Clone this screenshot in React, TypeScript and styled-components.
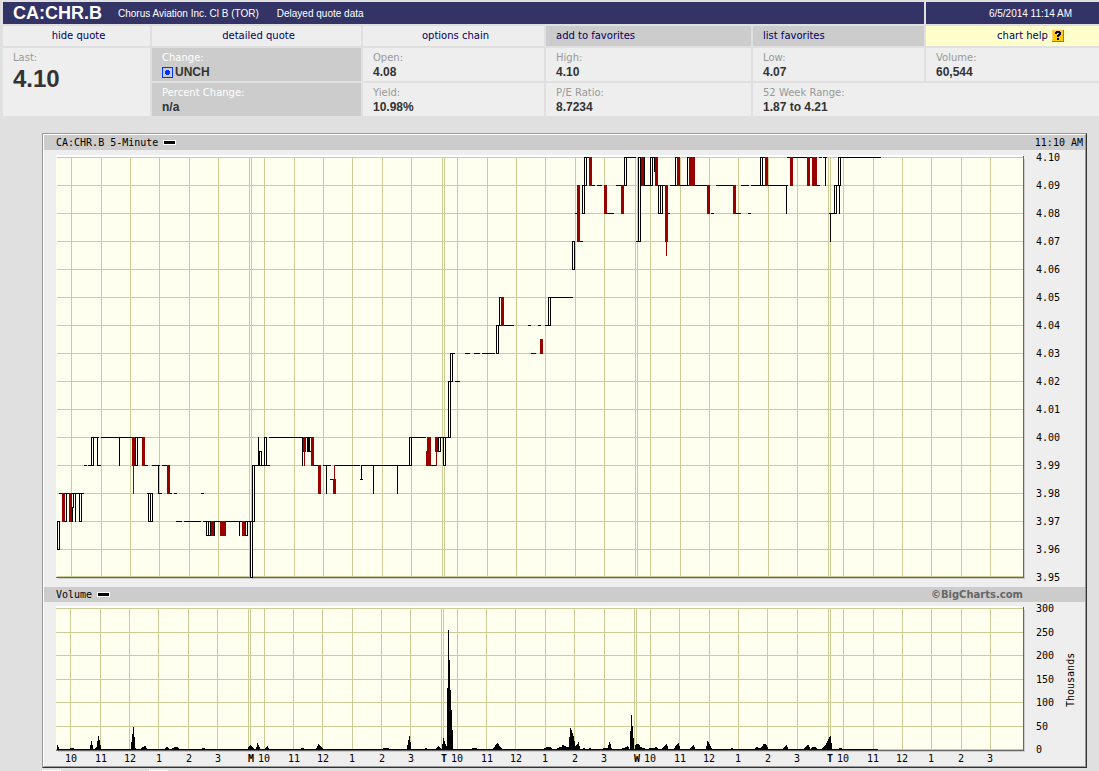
import React from "react";
import styled, { createGlobalStyle } from "styled-components";

const GlobalStyle = createGlobalStyle`
  body {
    margin: 0;
    background: #e0e0e0;
    font-family: Verdana, "DejaVu Sans", sans-serif;
    font-size: 10px;
    color: #333;
  }
`;

/* ---------- quote table ---------- */

const Quote = styled.div`
  display: grid;
  grid-template-columns: 147fr 209fr 181fr 205fr 171fr 173fr;
  grid-template-rows: 22px 20px;
  gap: 2px;
  padding: 2px 0 0 3px;
  white-space: nowrap;
`;

const TitleBar = styled.header`
  grid-column: span 5;
  display: flex;
  align-items: center;
  padding-left: 10px;
  background: #333366;
  color: #fff;
  font-family: "Liberation Sans", Arial, sans-serif;
`;

const Symbol = styled.h1`
  margin: 0;
  width: 105px;
  font-size: 18px;
  line-height: 22px;
`;

const Company = styled.span`
  margin-right: 18px;
`;

const Stamp = styled.time`
  display: flex;
  align-items: center;
  justify-content: center;
  padding-left: 36px;
  background: #333366;
  color: #fff;
  font-family: "Liberation Sans", Arial, sans-serif;
`;

const NavLink = styled.a<{ $tone?: string; $align?: string; $indent?: number }>`
  display: flex;
  align-items: center;
  justify-content: ${(p) => p.$align ?? "center"};
  gap: 4px;
  padding-left: ${(p) => p.$indent ?? 4}px;
  background: ${(p) => p.$tone ?? "#eee"};
  color: #000066;
  line-height: 20px;
  text-decoration: none;
`;

const Facts = styled.dl`
  grid-column: 1 / -1;
  display: grid;
  grid-template-columns: 147fr 209fr 181fr 205fr 171fr 173fr;
  grid-auto-rows: 33px;
  gap: 2px;
  margin: 0;
`;

const Fact = styled.div<{ $dark?: boolean; $rows?: number; $cols?: number }>`
  grid-row: span ${(p) => p.$rows ?? 1};
  grid-column: span ${(p) => p.$cols ?? 1};
  padding: 4px 0 0 10px;
  background: ${(p) => (p.$dark ? "#ccc" : "#eee")};
`;

const Label = styled.dt<{ $light?: boolean }>`
  color: ${(p) => (p.$light ? "#fff" : "#999")};
  line-height: 12px;
`;

const Value = styled.dd<{ $big?: boolean }>`
  display: flex;
  align-items: center;
  gap: 2px;
  margin: 0;
  font: bold ${(p) => (p.$big ? "24px/30px" : "12px/16px")} "Liberation Sans", Arial, sans-serif;
`;

/* ---------- chart ---------- */

const Frame = styled.main`
  margin: 17px 12px 0 42px;
  border: 1px solid #333;
  border-top-color: #999;
  border-left-color: #999;
`;

const Inner = styled.div`
  border: 1px solid #999;
  border-top-color: #fff;
  border-left-color: #fff;
  background: #eee;
`;

const PanelBar = styled.div<{ $endPad: number }>`
  display: flex;
  align-items: center;
  height: 15px;
  padding: 0 ${(p) => p.$endPad}px 0 12px;
  background: #ccc;
  color: #000;
  font: 10px/15px "DejaVu Sans Mono", monospace;
`;

const Legend = styled.span`
  width: 11px;
  height: 3px;
  margin-left: 5px;
  border: 1px solid #fff;
  background: #000;
`;

const BarEnd = styled.span`
  margin-left: auto;
`;

const Credit = styled(BarEnd)`
  color: #666;
  font: bold 10px/15px Verdana, "DejaVu Sans", sans-serif;
`;

const Plot = styled.svg`
  display: block;
  width: 100%;
  height: auto;
  font: 10px "DejaVu Sans Mono", monospace;
`;

const Tabs = styled.div`
  display: flex;
  gap: 88px;
  margin: 2px 0 0 42px;
`;

const TabEdge = styled.span`
  width: 19px;
  height: 1px;
  background: #fff;
`;

/* ---------- chart data ---------- */

const hours = [
  71, 101, 130, 159, 189, 218, 249, 251, 264, 294, 323, 352, 382, 411, 442, 444, 457, 487, 516, 545, 575,
  604, 635, 637, 650, 680, 709, 738, 768, 797, 828, 830, 843, 873, 902, 931, 961, 990,
];
const volumeHours = [
  70, 100, 129, 158, 188, 217, 248, 250, 264, 293, 322, 352, 381, 410, 441, 443, 457, 486, 515, 545, 574,
  604, 634, 636, 650, 679, 709, 738, 767, 797, 828, 830, 843, 873, 902, 931, 961, 990,
];
const hourLabels = [
  "10", "11", "12", "1", "2", "3", "", "M", "10", "11", "12", "1", "2", "3", "", "T", "10", "11", "12", "1",
  "2", "3", "", "W", "10", "11", "12", "1", "2", "3", "", "T", "10", "11", "12", "1", "2", "3",
];
const prices = [410, 409, 408, 407, 406, 405, 404, 403, 402, 401, 400, 399, 398, 397, 396, 395];
const priceY = (p: number) => 157 + (410 - p) * 28;
const volumeTicks: [number, number][] = [
  [300, 608], [250, 632], [200, 655], [150, 679], [100, 702], [50, 726], [0, 749],
];

/* level: [price, [from, to, from, to, ...]] */
const levels: [number, number[]][] = [
  [410, [584, 592, 624, 636, 638, 645, 650, 657, 675, 680, 687, 695, 760, 768, 787, 817, 819, 822, 823, 827, 838, 881]],
  [409, [582, 587, 592, 595, 597, 602, 616, 621, 624, 627, 644, 653, 657, 666, 670, 710, 716, 733, 741, 749, 751, 788, 817, 820, 834, 841]],
  [408, [575, 577, 607, 614, 668, 670, 711, 714, 736, 741, 748, 751, 829, 837]],
  [407, [580, 583, 636, 641]],
  [405, [499, 504, 548, 573]],
  [404, [496, 514, 528, 531, 538, 541, 545, 551]],
  [403, [450, 455, 465, 470, 474, 480, 482, 495, 531, 536]],
  [402, [448, 453, 455, 460]],
  [400, [91, 99, 101, 145, 269, 314, 409, 426, 438, 451]],
  [399, [84, 87, 88, 92, 97, 101, 145, 148, 152, 160, 162, 169, 252, 270, 314, 318, 323, 331, 334, 360, 361, 412, 431, 437]],
  [398.5, [330, 333, 360, 363]],
  [398, [59, 84, 147, 153, 158, 162, 169, 172, 174, 177, 201, 204]],
  [397, [176, 182, 184, 201, 203, 255]],
];

/* rising bars: [x, high, low] */
const hollow: [number, number, number][] = [
  [57, 397, 396], [64, 398, 397], [71, 398, 397.5], [79, 398, 397], [91, 400, 399], [135, 400, 399],
  [148, 398, 397], [150, 398, 397], [206, 397, 396.5], [208, 397, 396.5], [245, 397, 396.5],
  [250, 397, 395], [252, 399, 397], [259, 399.5, 399], [264, 400, 399], [309, 400, 399.5],
  [409, 400, 399], [438, 400, 399.5], [443, 400, 399], [448, 402, 400], [450, 403, 402],
  [496, 404, 403], [499, 405, 404], [548, 405, 404], [572, 407, 406], [582, 409, 408], [584, 410, 409],
  [624, 410, 409], [638, 410, 407], [650, 410, 409], [658, 409, 408], [660, 409, 408], [675, 410, 409],
  [687, 410, 409], [760, 410, 409], [834, 409, 408], [838, 410, 409],
];

/* black ranges: [x, high, low, width] */
const wicks: [number, number, number, number][] = [
  [72, 397.5, 397, 1], [75, 398, 397, 1], [97, 400, 399, 1], [119, 400, 399, 1], [158, 399, 398, 1],
  [214, 397, 396.5, 1], [239, 397, 396.5, 1], [258, 400, 399, 1], [302, 400, 399, 1],
  [307, 400, 399.5, 2], [326, 399, 398, 1], [361, 399, 398.5, 1], [373, 399, 398, 1], [397, 399, 398, 1],
  [644, 410, 409, 1], [654, 410, 409.5, 1], [786, 409, 408, 1], [825, 410, 409, 1], [830, 408, 407, 1],
  [839, 409, 408, 1],
];

/* falling bars: [x, high, low, width] */
const falling: [number, number, number, number][] = [
  [62, 398, 397, 3], [69, 398, 397, 3], [132, 400, 399, 3], [133, 399, 398, 1], [142, 400, 399, 3],
  [167, 399, 398, 3], [211, 397, 396.5, 3], [220, 397, 396.5, 6], [242, 397, 396.5, 3],
  [303, 400, 399.5, 3], [304, 399.5, 399, 1], [311, 400, 399, 3], [318, 399, 398, 3],
  [334, 399, 398.5, 1], [333, 398.5, 398, 3], [427, 400, 399, 4], [426, 399.5, 399, 1],
  [435, 400, 399.5, 3], [436, 399.5, 399, 1], [501, 405, 404, 3], [540, 403.5, 403, 3],
  [577, 409, 407, 3], [589, 410, 409, 3], [604, 409, 408, 3], [621, 409, 408, 3], [641, 410, 409, 3],
  [655, 410, 409, 3], [665, 409, 407, 3], [666, 407, 406.5, 1], [677, 410, 409, 3],
  [689, 410, 409, 6], [707, 409, 408, 3], [733, 409, 408, 3], [765, 410, 409, 3], [790, 410, 409, 3],
  [807, 410, 409, 3], [812, 410, 409, 5],
];

/* volume runs: first x, then one height for each pixel column */
const volumes: [number, number[]][] = [
  [57, [5, 3]], [70, [2, 2, 2, 2]], [90, [5, 9, 5]], [95, [2, 3, 9, 14, 10, 5]],
  [131, [8, 16, 23, 13, 2]], [141, [2, 3, 3, 4, 4, 2]], [165, [2, 3, 3, 2]],
  [172, [2, 2, 3, 3, 3, 3, 2]], [202, [2, 2, 2]], [248, [3, 4, 5, 4, 3, 2]], [256, [3, 7, 5, 3]],
  [265, [2, 3, 4, 2]], [301, [2, 2, 2]], [316, [2, 4, 6, 5, 4, 3, 2]], [383, [2, 2, 2, 2, 2, 2]],
  [407, [5, 10, 14, 8]], [425, [2, 2]], [436, [2, 3, 4, 3, 2]],
  [442, [6, 12, 9, 6, 4, 62, 120, 90, 60, 40, 20]], [472, [2, 2, 2, 2, 2]],
  [493, [2, 3, 5, 6, 7, 6, 4, 3, 2]], [544, [2, 2, 3, 3, 3, 3, 3, 2]],
  [557, [2, 2, 3, 3, 3, 5, 5, 4, 4, 3, 3, 3, 13, 22, 20, 17, 14, 9, 4, 5, 6, 8, 4]],
  [583, [2, 2]], [589, [2, 2]], [603, [2, 2, 2, 2, 2, 5, 8, 6, 2]], [622, [2, 2, 2, 3, 3, 4, 3]],
  [630, [19, 35, 24, 12]], [635, [5, 6, 6, 6, 5, 3, 3, 2, 2, 2]], [649, [2, 2, 2, 2, 2, 2, 3, 3, 2]],
  [662, [2, 3, 4, 5, 6, 4]], [674, [2, 4, 5, 6, 7, 4]], [690, [2, 3, 4, 5, 3]],
  [706, [4, 9, 8, 6, 4, 2]], [731, [2, 2]], [755, [2, 3, 3, 2, 2, 2, 3, 4, 6, 6, 6, 5, 3]],
  [783, [2, 3, 4, 5, 3]], [804, [2, 3, 4, 5, 5, 3]], [811, [2, 3, 3, 3, 3, 2]],
  [822, [2, 3, 4, 5, 7, 9, 11, 13, 14, 7]], [839, [2, 2, 2]],
];

const Paper = ({ top, bottom }: { top: number; bottom: number }) => (
  <>
    <rect x="58" y={top + 2} width="967" height={bottom - top} fill="#ccc" />
    <rect x="56" y={top - 1} width="968" height={bottom - top + 2} fill="#666" />
    <rect x="56" y={top - 2} width="967" height={bottom - top + 2} fill="#fff" />
    <rect x="56" y={top} width="967" height={bottom - top} fill="#fffff0" />
  </>
);

function PricePlot() {
  return (
    <Plot viewBox="44 150 1041 437" shapeRendering="crispEdges" role="img" aria-label="Price, 5-minute">
      <Paper top={157} bottom={577} />
      <g fill="#cccc99">
        {hours.map((x) => <rect key={x} x={x} y="157" width="1" height="420" />)}
        {prices.map((p) => <rect key={p} x="57" y={p === 395 ? 576 : priceY(p)} width="966" height="1" />)}
      </g>
      {hollow.map(([x, hi, lo], i) => (
        <g key={i}>
          <rect x={x} y={priceY(hi)} width="3" height={priceY(lo) - priceY(hi) + 1} fill="#000" />
          <rect x={x + 1} y={priceY(hi) + 1} width="1" height={priceY(lo) - priceY(hi) - 1} fill="#fffff0" />
        </g>
      ))}
      {wicks.map(([x, hi, lo, w], i) => (
        <rect key={i} x={x} y={priceY(hi)} width={w} height={priceY(lo) - priceY(hi) + 1} />
      ))}
      {levels.map(([p, xs]) =>
        xs.map((x, i) => (i % 2 ? null : <rect key={`${p}-${x}`} x={x} y={priceY(p)} width={xs[i + 1] - x} height="1" />)),
      )}
      {falling.map(([x, hi, lo, w], i) => (
        <rect key={i} x={x} y={priceY(hi)} width={w} height={priceY(lo) - priceY(hi) + 1} fill="#990000" />
      ))}
      {prices.map((p) => (
        <text key={p} x="1036" y={priceY(p) + 4}>{(p / 100).toFixed(2)}</text>
      ))}
    </Plot>
  );
}

function VolumePlot() {
  return (
    <Plot viewBox="44 602 1041 164" shapeRendering="crispEdges" role="img" aria-label="Volume, thousands">
      <Paper top={608} bottom={750} />
      <g fill="#cccc99">
        {volumeHours.map((x) => <rect key={x} x={x} y="608" width="1" height="142" />)}
        {volumeTicks.map(([v, y]) => <rect key={v} x="56" y={y} width="967" height="1" />)}
      </g>
      <rect x="57" y="749" width="821" height="1" />
      {volumes.map(([x0, heights]) =>
        heights.map((h, i) => <rect key={x0 + i} x={x0 + i} y={750 - h} width="1" height={h} />),
      )}
      {volumeTicks.map(([v, y]) => <text key={v} x="1036" y={y + 4}>{v}</text>)}
      {hours.map((x, i) => (
        <text key={x} x={x} y="762" textAnchor="middle" fontWeight={/[A-Z]/.test(hourLabels[i]) ? 700 : 400}>
          {hourLabels[i]}
        </text>
      ))}
      <text transform="translate(1074 707) rotate(-90)">Thousands</text>
    </Plot>
  );
}

const HelpIcon = () => (
  <svg width="12" height="12" viewBox="0 0 12 12" aria-hidden="true">
    <rect width="12" height="12" fill="#cc6600" />
    <rect width="11" height="11" fill="#ffcc66" />
    <rect x="1" y="1" width="10" height="10" fill="#ffcc00" />
    <path d="M3 4V2h1V1h4v1h1v3H8v1H7v1H5V5h1V4h1V3H5v1zM5 8h2v2H5z" fill="#000033" />
  </svg>
);

const UnchangedIcon = () => (
  <svg width="11" height="11" viewBox="0 0 11 11" aria-hidden="true">
    <rect x="0.5" y="0.5" width="10" height="10" fill="#ccc" stroke="#0033ff" />
    <path d="M4 3h3v1h1v3H7v1H4V7H3V4h1z" fill="#0033ff" />
  </svg>
);

export default function App() {
  return (
    <>
      <GlobalStyle />
      <Quote>
        <TitleBar>
          <Symbol>CA:CHR.B</Symbol>
          <Company>Chorus Aviation Inc. Cl B (TOR)</Company>
          <span>Delayed quote data</span>
        </TitleBar>
        <Stamp>6/5/2014 11:14 AM</Stamp>
        <NavLink href="#hide">hide quote</NavLink>
        <NavLink href="#detailed">detailed quote</NavLink>
        <NavLink href="#options">options chain</NavLink>
        <NavLink href="#add" $tone="#ccc" $align="flex-start" $indent={10}>add to favorites</NavLink>
        <NavLink href="#list" $tone="#ccc" $align="flex-start" $indent={10}>list favorites</NavLink>
        <NavLink href="#help" $tone="#ffffcc" $indent={36}>chart help <HelpIcon /></NavLink>
        <Facts>
          <Fact $rows={2}><Label>Last:</Label><Value $big>4.10</Value></Fact>
          <Fact $dark><Label $light>Change:</Label><Value><UnchangedIcon />UNCH</Value></Fact>
          <Fact><Label>Open:</Label><Value>4.08</Value></Fact>
          <Fact><Label>High:</Label><Value>4.10</Value></Fact>
          <Fact><Label>Low:</Label><Value>4.07</Value></Fact>
          <Fact><Label>Volume:</Label><Value>60,544</Value></Fact>
          <Fact $dark><Label $light>Percent Change:</Label><Value>n/a</Value></Fact>
          <Fact><Label>Yield:</Label><Value>10.98%</Value></Fact>
          <Fact><Label>P/E Ratio:</Label><Value>8.7234</Value></Fact>
          <Fact $cols={2}><Label>52 Week Range:</Label><Value>1.87 to 4.21</Value></Fact>
        </Facts>
      </Quote>
      <Frame>
        <Inner>
          <PanelBar $endPad={2}>CA:CHR.B 5-Minute<Legend /><BarEnd>11:10 AM</BarEnd></PanelBar>
          <PricePlot />
          <PanelBar $endPad={62}>Volume<Legend /><Credit>©BigCharts.com</Credit></PanelBar>
          <VolumePlot />
        </Inner>
      </Frame>
      <Tabs><TabEdge /><TabEdge /></Tabs>
    </>
  );
}
